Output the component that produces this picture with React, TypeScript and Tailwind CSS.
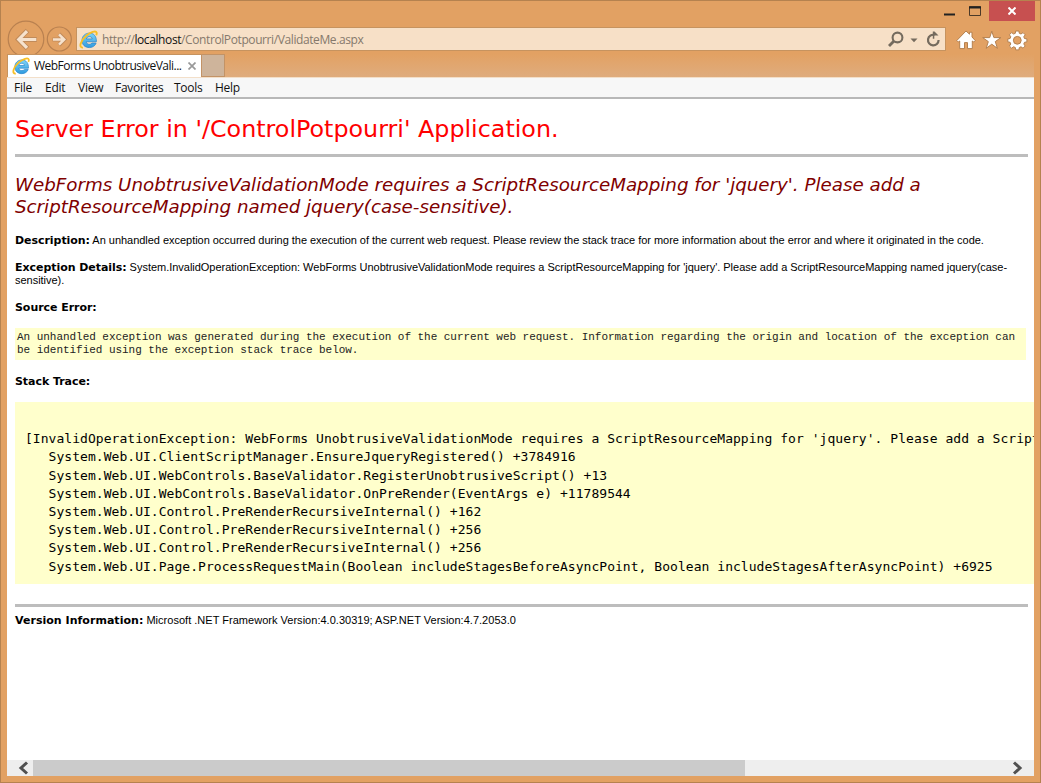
import React from "react";

const ui = "font-['Open_Sans',sans-serif]";

function IELogo({ className }: { className: string }) {
  return (
    <svg viewBox="0 0 20 20" className={className}>
      <defs>
        <linearGradient id="ie-blue" x1="0" y1="0" x2="0" y2="1">
          <stop offset="0" stopColor="#7fd4f5" />
          <stop offset="1" stopColor="#2f9be0" />
        </linearGradient>
      </defs>
      <path
        d="M18.300 12.400H7.600c.2 1.700 1.500 2.700 3.300 2.700 1.300 0 2.200-.5 2.800-1.300h4.300c-1 2.900-3.700 4.700-7.100 4.700-4.600 0-7.700-3-7.700-7.500s3.200-7.700 7.800-7.700c4.800 0 7.500 3.400 7.300 9.100zM7.700 9.400h6.200c-.2-1.500-1.300-2.400-3-2.400s-2.900.9-3.200 2.400z"
        fill="url(#ie-blue)"
        stroke="#2a86cc"
        strokeWidth=".8"
      />
      <path
        d="M4.200 18.500C-.6 19 1.300 11.500 7.600 6 12 2.200 17.700.2 18.500 2.600c.3.900.1 1.900-.4 2.900"
        fill="none"
        stroke="#f7bf26"
        strokeWidth="2"
      />
    </svg>
  );
}

const stack = [
  "[InvalidOperationException: WebForms UnobtrusiveValidationMode requires a ScriptResourceMapping for 'jquery'. Please add a Script",
  "   System.Web.UI.ClientScriptManager.EnsureJqueryRegistered() +3784916",
  "   System.Web.UI.WebControls.BaseValidator.RegisterUnobtrusiveScript() +13",
  "   System.Web.UI.WebControls.BaseValidator.OnPreRender(EventArgs e) +11789544",
  "   System.Web.UI.Control.PreRenderRecursiveInternal() +162",
  "   System.Web.UI.Control.PreRenderRecursiveInternal() +256",
  "   System.Web.UI.Control.PreRenderRecursiveInternal() +256",
  "   System.Web.UI.Page.ProcessRequestMain(Boolean includeStagesBeforeAsyncPoint, Boolean includeStagesAfterAsyncPoint) +6925",
];

function Label({ children }: { children: React.ReactNode }) {
  return <b className="font-['DejaVu_Sans',sans-serif] text-[11px] font-bold tracking-[-0.05px]">{children}</b>;
}

function TitleBar() {
  return (
    <div className="flex h-5 justify-end pr-[5px]">
      <svg className="h-5 w-[46px]" viewBox="0 0 46 20">
        <path d="M1 13.500h11" stroke="#222" strokeWidth="2" />
        <path d="M26.500 5.500h11v9h-11z" fill="none" stroke="#4c3a28" />
        <path d="M26 6.500h12" stroke="#222" strokeWidth="2" />
      </svg>
      <button className="flex h-5 w-[46px] items-center justify-center bg-[#c75050]">
        <svg className="h-2 w-2" viewBox="0 0 8 8">
          <path d="M.5.5l7 7M7.500.5l-7 7" stroke="#fff" strokeWidth="2" />
        </svg>
      </button>
    </div>
  );
}

function NavBar() {
  return (
    <div className="flex h-[33px] pl-[6px]">
      <svg className="relative h-[33px] w-[69px] shrink-0 overflow-visible" viewBox="0 0 69 33">
        <g fill="none" stroke="#b98150" strokeWidth="1.200">
          <circle cx="19" cy="18" r="17.800" />
          <circle cx="52.300" cy="18" r="12" />
        </g>
        <g fill="none">
          <path d="M29.800 18.500h-17M20.500 9.500l-9 9 9 9" stroke="#c18b5a" strokeWidth="5" />
          <path d="M29.300 18.500H12.500M20 10.200l-8.200 8.300 8.200 8.300" stroke="#f6e2cd" strokeWidth="3.200" />
          <path d="M45.500 18.500h11M52 13l5.500 5.500-5.500 5.500" stroke="#c18b5a" strokeWidth="4" />
          <path d="M46 18.500h10.500M52 13.400l5.200 5.100-5.200 5.100" stroke="#f6e2cd" strokeWidth="2.500" />
        </g>
      </svg>
      <div className="mt-[6px] flex h-6 w-[870px] shrink-0 items-center border border-[#c6935f] bg-[#f7e0c7] pl-[2px]">
        <IELogo className="h-[19px] w-[19px] shrink-0" />
        <div className={`${ui} ml-1 w-[784px] whitespace-nowrap pt-[2px] text-[12px] leading-[22px] tracking-[-0.4px] text-[#85796c]`}>
          http://<span className="text-[#111]">localhost</span>/ControlPotpourri/ValidateMe.aspx
        </div>
        <svg className="h-[22px] w-[60px] shrink-0" viewBox="0 0 60 22" fill="none" stroke="#756b5e">
          <circle cx="12.500" cy="9.500" r="4.900" strokeWidth="2.100" />
          <path d="M9 13L4 18" strokeWidth="2.800" />
          <path d="M25.500 10.500h7l-3.500 3.800z" fill="#756b5e" stroke="none" />
          <path d="M49.500 6.900a5.300 5.300 0 1 0 4.100 5.200" strokeWidth="2.200" />
          <path d="M47.800 3.500h1.700l4 4h-4.200v3.200h-1.500z" fill="#756b5e" stroke="none" />
        </svg>
      </div>
      <svg className="ml-[10px] h-[33px] w-[72px] shrink-0" viewBox="0 0 72 33" fill="#fff" stroke="#b4804f" strokeWidth="1">
        <path d="M10 10L.8 19.500l1.500 1.500 1.400-1V27.600h4.800v-6h3v6h4.800V20l1.400 1 1.500-1.500-3.200-3.500v-4.800h-2.500v2z" />
        <path d="M35.800 10.200l2.100 6.400h7l-5.600 4 2.100 6.700-5.600-4.100-5.600 4.100 2.100-6.700-5.600-4h7z" />
        <g>
          <path d="M59.700 10h3.200l.4 2.300 1.700.7 2-1.400 2.200 2.200-1.400 2 .7 1.700 2.400.4v3l-2.400.4-.7 1.700 1.400 2-2.200 2.200-2-1.400-1.700.7-.4 2.400h-3.200l-.4-2.400-1.700-.7-2 1.400-2.200-2.200 1.400-2-.7-1.700-2.300-.4v-3l2.300-.4.7-1.700-1.400-2 2.200-2.200 2 1.400 1.700-.7z" />
          <circle cx="61.300" cy="19.300" r="3.900" fill="#e2a163" />
        </g>
      </svg>
    </div>
  );
}

function TabRow() {
  return (
    <div className="relative mr-[6px] ml-[6px] flex h-[23px] bg-gradient-to-b from-[#e2a163] to-[#dfac7d]">
      <div className="flex w-[194px] items-center border-t border-l border-[#c6935f] bg-white pl-[4px]">
        <IELogo className="h-[18px] w-[18px] shrink-0" />
        <span className={`${ui} ml-[4px] w-[150px] shrink-0 whitespace-nowrap text-[12px] tracking-[-0.52px] text-[#111]`}>
          WebForms UnobtrusiveVali...
        </span>
        <svg className="ml-[4px] h-2 w-2 shrink-0" viewBox="0 0 8 8">
          <path d="M.5.5l7 7M7.500.5l-7 7" stroke="#999" strokeWidth="1.700" />
        </svg>
      </div>
      <div className="w-6 border border-[#c39366] bg-[#ceb49b]" />
    </div>
  );
}

function MenuBar() {
  return (
    <div className={`${ui} flex h-[22px] shrink-0 border-t border-b-2 border-t-[#f3dfc9] border-b-[#b8b8b8] bg-[#f7f7f7] pl-[7px] text-[12px] leading-[20px] tracking-[-0.25px] text-[#111]`}>
      <span className="w-[31px]">File</span>
      <span className="w-[33px]">Edit</span>
      <span className="w-[37px]">View</span>
      <span className="w-[59px]">Favorites</span>
      <span className="w-[41px]">Tools</span>
      <span>Help</span>
    </div>
  );
}

function ScrollBar() {
  return (
    <div className="flex h-4 shrink-0 items-stretch bg-[#eee]">
      <svg className="h-4 w-[26px] shrink-0" viewBox="0 0 26 16">
        <path d="M20 2.500L14 8l6 5.500" fill="none" stroke="#505050" strokeWidth="3" />
      </svg>
      <div className="w-[712px] bg-[#cbcbcb]" />
      <div className="flex-1" />
      <svg className="h-4 w-[26px] shrink-0" viewBox="0 0 26 16">
        <path d="M6 2.500L12 8l-6 5.500" fill="none" stroke="#505050" strokeWidth="3" />
      </svg>
    </div>
  );
}

function ErrorPage() {
  return (
    <main className="flex min-h-0 flex-1 flex-col overflow-hidden whitespace-nowrap pl-2 font-['Liberation_Sans',sans-serif] text-[11px] leading-[13px] text-black">
      <h1 className="mt-[15px] h-[30px] font-['DejaVu_Sans',sans-serif] text-[23.8px] leading-[30px] text-[#f00]">
        Server Error in '/ControlPotpourri' Application.
      </h1>
      <hr className="mt-[10px] h-[3px] w-[1013px] shrink-0 border-0 bg-[#bdbdbd]" />
      <h2 className="mt-[17px] h-[44px] font-['DejaVu_Sans',sans-serif] text-[18.3px] leading-[22px] tracking-[-0.02px] text-[#800000] italic">
        WebForms UnobtrusiveValidationMode requires a ScriptResourceMapping for 'jquery'. Please add a
        <br />
        ScriptResourceMapping named jquery(case-sensitive).
      </h2>
      <p className="mt-[16px] h-[13px] tracking-[-0.03px]">
        <Label>Description:</Label> An unhandled exception occurred during the execution of the current web request. Please review the stack trace for more information about the error and where it originated in the code.
      </p>
      <p className="mt-[14px] h-[26px] tracking-[-0.022px]">
        <Label>Exception Details:</Label> System.InvalidOperationException: WebForms UnobtrusiveValidationMode requires a ScriptResourceMapping for 'jquery'. Please add a ScriptResourceMapping named jquery(case-
        <br />
        sensitive).
      </p>
      <p className="mt-[14px] h-[13px]">
        <Label>Source Error:</Label>
      </p>
      <pre className="mt-[14px] h-[32px] w-[1011px] shrink-0 bg-[#ffffcc] pt-[3px] pl-[2px] font-['Liberation_Mono',monospace] text-[11px] leading-[13px] tracking-[-0.035px] text-[#222]">
        {"An unhandled exception was generated during the execution of the current web request. Information regarding the origin and location of the exception can\nbe identified using the exception stack trace below."}
      </pre>
      <p className="mt-[15px] h-[13px]">
        <Label>Stack Trace:</Label>
      </p>
      <pre className="mt-[14px] h-[182px] shrink-0 overflow-hidden bg-[#ffffcc] pt-[28.2px] pl-[10px] font-['DejaVu_Sans_Mono',monospace] text-[13px] leading-[18.2px] tracking-[0.04px]">
        {stack.join("\n")}
      </pre>
      <hr className="mt-[20px] h-[3px] w-[1013px] shrink-0 border-0 bg-[#bdbdbd]" />
      <p className="mt-[7px] h-[13px] tracking-[0.02px]">
        <b className="font-['DejaVu_Sans',sans-serif] font-bold tracking-[0.03px]">Version Information:</b> Microsoft .NET Framework Version:4.0.30319; ASP.NET Version:4.7.2053.0
      </p>
    </main>
  );
}

export default function App() {
  return (
    <div className="flex h-[783px] w-[1041px] flex-col overflow-hidden border border-[#b5824f] bg-[#e2a163]">
      <TitleBar />
      <NavBar />
      <TabRow />
      <div className="mx-[6px] mb-[6px] flex min-h-0 flex-1 flex-col bg-white">
        <MenuBar />
        <ErrorPage />
        <ScrollBar />
      </div>
    </div>
  );
}
